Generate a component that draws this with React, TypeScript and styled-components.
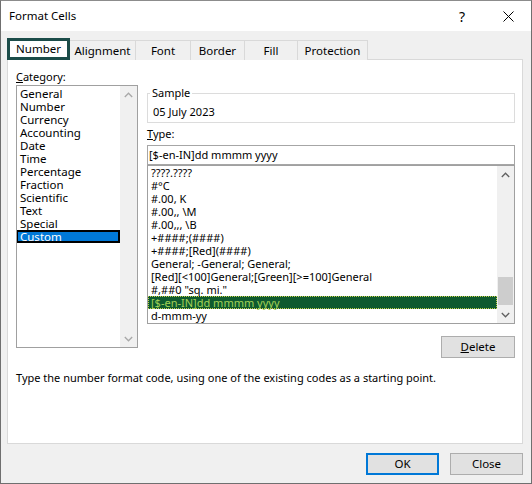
import React from "react";
import styled, { createGlobalStyle } from "styled-components";

const Global = createGlobalStyle`
  html, body { margin: 0; padding: 0; background: #ffffff; }
  body {
    font-family: "Noto Sans", "Open Sans", sans-serif;
    font-size: 11px;
    color: #000000;
  }
  * { box-sizing: border-box; }
`;

const Window = styled.div`
  width: 532px;
  height: 484px;
  border: 1px solid #6f6f6f;
  border-top-color: #8c8c8c;
  background: #f0f0f0;
  display: flex;
  flex-direction: column;
`;

const TitleBar = styled.div`
  height: 30px;
  background: #ffffff;
  display: flex;
  align-items: center;
  flex-shrink: 0;
`;

const Title = styled.div`
  flex: 1;
  padding-left: 8px;
  font-size: 11.5px;
  line-height: 16px;
`;

const CaptionButton = styled.div`
  width: 46px;
  height: 30px;
  display: flex;
  align-items: center;
  justify-content: center;
  font-size: 14px;
`;

const Body = styled.div`
  flex: 1;
  display: flex;
  flex-direction: column;
  padding: 7px 8px 0 6px;
`;

const TabRow = styled.div`
  display: flex;
  align-items: flex-end;
  height: 22px;
  margin-bottom: -1px;
  position: relative;
  z-index: 1;
`;

const Tab = styled.div<{ $w: number; $active?: boolean }>`
  width: ${(p) => p.$w}px;
  height: ${(p) => (p.$active ? 22 : 20)}px;
  display: flex;
  align-items: center;
  justify-content: center;
  line-height: 14px;
  font-size: 11.5px;
  background: ${(p) => (p.$active ? "#ffffff" : "#f0f0f0")};
  border: ${(p) => (p.$active ? "3px solid #1b4c49" : "1px solid #d9d9d9")};
  border-bottom: ${(p) => (p.$active ? "3px solid #1b4c49" : "none")};
  border-left: ${(p) => (p.$active ? "3px solid #1b4c49" : "none")};
  padding-top: ${(p) => (p.$active ? 0 : 1)}px;
`;

const Panel = styled.div`
  height: 385px;
  background: #ffffff;
  border: 1px solid #d9d9d9;
  padding: 0 7px 0 8px;
  display: flex;
  flex-direction: column;
`;

const Columns = styled.div`
  display: flex;
  gap: 9px;
`;

const LeftCol = styled.div`
  width: 122px;
  padding-top: 9px;
  display: flex;
  flex-direction: column;
`;

const FieldLabel = styled.div<{ $h: number }>`
  height: ${(p) => p.$h}px;
  line-height: ${(p) => p.$h}px;
  u { text-decoration: underline; }
`;

const ListBox = styled.div<{ $h: number }>`
  height: ${(p) => p.$h}px;
  border: 1px solid #a0a0a0;
  background: #ffffff;
  display: flex;
`;

const ListItems = styled.div<{ $top: number }>`
  flex: 1;
  padding-top: ${(p) => p.$top}px;
  overflow: hidden;
`;

const CatItem = styled.div<{ $selected?: boolean }>`
  height: 13px;
  line-height: 13px;
  font-size: 11.5px;
  white-space: nowrap;
  background: ${(p) => (p.$selected ? "#0078d7" : "transparent")};
  color: ${(p) => (p.$selected ? "#ffffff" : "#000000")};
  box-shadow: ${(p) => (p.$selected ? "inset 0 0 0 2px #000000" : "none")};
  margin-left: ${(p) => (p.$selected ? -1 : 0)}px;
  padding-left: ${(p) => (p.$selected ? 4 : 3)}px;
`;

const TypeItem = styled.div<{ $selected?: boolean }>`
  height: 13px;
  line-height: 13px;
  padding-left: 3px;
  white-space: nowrap;
  background: ${(p) => (p.$selected ? "#0f5a2f" : "transparent")};
  color: ${(p) => (p.$selected ? "#a3d156" : "#000000")};
  outline: ${(p) => (p.$selected ? "1px dotted #c4d04a" : "none")};
  outline-offset: -1px;
`;

const ScrollBar = styled.div`
  width: 17px;
  background: #f0f0f0;
  display: flex;
  flex-direction: column;
  align-items: center;
`;

const ArrowBox = styled.div`
  width: 17px;
  height: 17px;
  display: flex;
  align-items: center;
  justify-content: center;
`;

const Track = styled.div`
  flex: 1;
  width: 100%;
  display: flex;
  flex-direction: column;
  justify-content: flex-end;
  align-items: center;
`;

const Thumb = styled.div`
  width: 15px;
  height: 28px;
  background: #cdcdcd;
  margin-bottom: 1px;
`;

const RightCol = styled.div`
  flex: 1;
  display: flex;
  flex-direction: column;
`;

const Group = styled.fieldset`
  margin: 26px 0 0 0;
  padding: 0 2px 2px 2px;
  border: 1px solid #dcdcdc;
  min-width: 0;
`;

const Legend = styled.legend`
  padding: 0 2px;
  margin-left: 0;
  line-height: 14px;
`;

const SampleValue = styled.div`
  margin-top: 4px;
  line-height: 16px;
  padding-left: 3px;
`;

const TypeLabelWrap = styled.div`
  margin-top: 4px;
  margin-bottom: 4px;
`;

const TypeInput = styled.div`
  height: 20px;
  border: 1px solid #a6a6a6;
  background: #ffffff;
  line-height: 18px;
  padding-left: 1px;
  white-space: nowrap;
`;

const ButtonRow = styled.div<{ $top: number }>`
  display: flex;
  justify-content: flex-end;
  gap: 11px;
  margin-top: ${(p) => p.$top}px;
`;

const Button = styled.div<{ $w: number; $default?: boolean }>`
  width: ${(p) => p.$w}px;
  height: 22px;
  background: #e1e1e1;
  border: ${(p) => (p.$default ? "2px solid #0078d7" : "1px solid #adadad")};
  display: flex;
  align-items: center;
  justify-content: center;
  line-height: 14px;
  font-size: 11.5px;
  u { text-decoration: underline; }
`;

const Description = styled.div`
  margin-top: 12px;
  line-height: 16px;
`;

const Footer = styled.div`
  display: flex;
  justify-content: flex-end;
  gap: 11px;
  padding-top: 9px;
`;

const Chevron = ({ up, color }: { up?: boolean; color: string }) => (
  <svg width="9" height="6" viewBox="0 0 9 6">
    <polyline
      points={up ? "0.8,5 4.5,1.2 8.2,5" : "0.8,1 4.5,4.8 8.2,1"}
      fill="none"
      stroke={color}
      strokeWidth="1.3"
    />
  </svg>
);

const categories = [
  "General",
  "Number",
  "Currency",
  "Accounting",
  "Date",
  "Time",
  "Percentage",
  "Fraction",
  "Scientific",
  "Text",
  "Special",
  "Custom",
];

const formats = [
  "????.????",
  "#°C",
  "#.00, K",
  "#.00,, \\M",
  "#.00,,, \\B",
  "+####;(####)",
  "+####;[Red](####)",
  "General; -General; General;",
  "[Red][<100]General;[Green][>=100]General",
  '#,##0 "sq. mi."',
  "[$-en-IN]dd mmmm yyyy",
  "d-mmm-yy",
];

const tabs: { label: string; w: number }[] = [
  { label: "Number", w: 63 },
  { label: "Alignment", w: 66 },
  { label: "Font", w: 55 },
  { label: "Border", w: 54 },
  { label: "Fill", w: 53 },
  { label: "Protection", w: 70 },
];

export default function App() {
  return (
    <>
      <Global />
      <Window>
        <TitleBar>
          <Title>Format Cells</Title>
          <CaptionButton>?</CaptionButton>
          <CaptionButton>
            <svg width="11" height="11" viewBox="0 0 11 11">
              <path d="M0.5 0.5 L10.5 10.5 M10.5 0.5 L0.5 10.5" stroke="#000" strokeWidth="1" />
            </svg>
          </CaptionButton>
        </TitleBar>
        <Body>
          <TabRow>
            {tabs.map((t, i) => (
              <Tab key={t.label} $w={t.w} $active={i === 0}>
                {t.label}
              </Tab>
            ))}
          </TabRow>
          <Panel>
            <Columns>
              <LeftCol>
                <FieldLabel $h={16}>
                  <u>C</u>ategory:
                </FieldLabel>
                <ListBox $h={263}>
                  <ListItems $top={1}>
                    {categories.map((c) => (
                      <CatItem key={c} $selected={c === "Custom"}>
                        {c}
                      </CatItem>
                    ))}
                  </ListItems>
                  <ScrollBar>
                    <ArrowBox>
                      <Chevron up color="#a8a8a8" />
                    </ArrowBox>
                    <Track />
                    <ArrowBox>
                      <Chevron color="#a8a8a8" />
                    </ArrowBox>
                  </ScrollBar>
                </ListBox>
              </LeftCol>
              <RightCol>
                <Group>
                  <Legend>Sample</Legend>
                  <SampleValue>05 July 2023</SampleValue>
                </Group>
                <TypeLabelWrap>
                  <FieldLabel $h={14}>
                    <u>T</u>ype:
                  </FieldLabel>
                </TypeLabelWrap>
                <TypeInput>[$-en-IN]dd mmmm yyyy</TypeInput>
                <ListBox $h={159}>
                  <ListItems $top={0}>
                    {formats.map((f, i) => (
                      <TypeItem key={f} $selected={i === 10}>
                        {f}
                      </TypeItem>
                    ))}
                  </ListItems>
                  <ScrollBar>
                    <ArrowBox>
                      <Chevron up color="#606060" />
                    </ArrowBox>
                    <Track>
                      <Thumb />
                    </Track>
                    <ArrowBox>
                      <Chevron color="#606060" />
                    </ArrowBox>
                  </ScrollBar>
                </ListBox>
                <ButtonRow $top={12}>
                  <Button $w={74}>
                    <span>
                      <u>D</u>elete
                    </span>
                  </Button>
                </ButtonRow>
              </RightCol>
            </Columns>
            <Description>
              Type the number format code, using one of the existing codes as a starting point.
            </Description>
          </Panel>
          <Footer>
            <Button $w={73} $default>
              OK
            </Button>
            <Button $w={73}>Close</Button>
          </Footer>
        </Body>
      </Window>
    </>
  );
}
